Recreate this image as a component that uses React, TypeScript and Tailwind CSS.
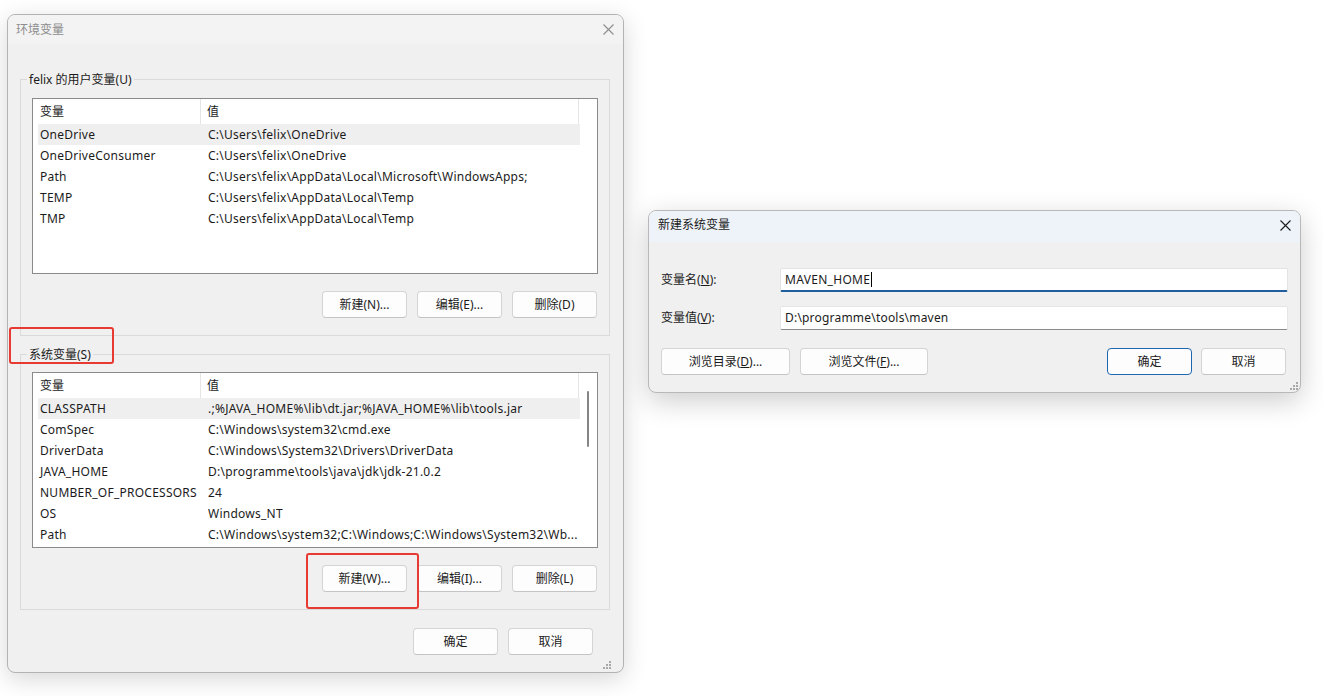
import React from "react";

const FONT = { fontFamily: '"Noto Sans", "Noto Sans CJK SC", sans-serif' };

type Row = [string, string];

const userRows: Row[] = [
  ["OneDrive", "C:\\Users\\felix\\OneDrive"],
  ["OneDriveConsumer", "C:\\Users\\felix\\OneDrive"],
  ["Path", "C:\\Users\\felix\\AppData\\Local\\Microsoft\\WindowsApps;"],
  ["TEMP", "C:\\Users\\felix\\AppData\\Local\\Temp"],
  ["TMP", "C:\\Users\\felix\\AppData\\Local\\Temp"],
];

const sysRows: Row[] = [
  ["CLASSPATH", ".;%JAVA_HOME%\\lib\\dt.jar;%JAVA_HOME%\\lib\\tools.jar"],
  ["ComSpec", "C:\\Windows\\system32\\cmd.exe"],
  ["DriverData", "C:\\Windows\\System32\\Drivers\\DriverData"],
  ["JAVA_HOME", "D:\\programme\\tools\\java\\jdk\\jdk-21.0.2"],
  ["NUMBER_OF_PROCESSORS", "24"],
  ["OS", "Windows_NT"],
  ["Path", "C:\\Windows\\system32;C:\\Windows;C:\\Windows\\System32\\Wb..."],
];

function CloseIcon({ color }: { color: string }) {
  return (
    <svg width="11" height="11" viewBox="0 0 11 11">
      <path d="M0.5 0.5 L10.5 10.5 M10.5 0.5 L0.5 10.5" stroke={color} strokeWidth="1.1" />
    </svg>
  );
}

function Grip() {
  return (
    <svg width="8" height="8" viewBox="0 0 8 8">
      {[
        [6, 0],
        [3, 3],
        [6, 3],
        [0, 6],
        [3, 6],
        [6, 6],
      ].map(([x, y], i) => (
        <rect key={i} x={x} y={y} width="2" height="2" fill="#a8a8a8" />
      ))}
    </svg>
  );
}

function Btn({
  children,
  w = "w-[85px]",
  primary = false,
}: {
  children: React.ReactNode;
  w?: string;
  primary?: boolean;
}) {
  return (
    <div
      className={`${w} h-[27px] shrink-0 flex items-center justify-center rounded-[4px] text-[12px] text-[#1b1b1b] bg-[#fdfdfd] border ${
        primary ? "border-[#1f66b0]" : "border-[#d4d4d4] border-b-[#c4c4c4]"
      }`}
    >
      {children}
    </div>
  );
}

function ListView({ rows, scroll }: { rows: Row[]; scroll?: boolean }) {
  return (
    <div className="h-[176px] border border-[#8a8a8a] bg-white flex overflow-hidden">
      <div className="flex-1 flex flex-col min-w-0">
        <div className="h-[25px] flex shrink-0 text-[12px] text-[#1b1b1b]">
          <div className="w-[168px] h-full pl-[7px] flex items-center border-r border-[#e5e5e5]">变量</div>
          <div className="w-[378px] h-full pl-[6px] flex items-center border-r border-[#e5e5e5]">值</div>
        </div>
        {rows.map(([k, v], i) => (
          <div
            key={k + i}
            className={`ml-[5px] w-[542px] h-[21px] shrink-0 flex items-center text-[12px] tracking-[0.25px] text-[#1b1b1b] whitespace-nowrap ${
              i === 0 ? "bg-[#efefef]" : ""
            }`}
          >
            <div className="w-[170px] pl-[2px] shrink-0">{k}</div>
            <div className="flex-1 overflow-hidden">{v}</div>
          </div>
        ))}
      </div>
      {scroll && (
        <div className="w-[18px] shrink-0 flex justify-center pt-[18px]">
          <div className="w-[2px] h-[56px] bg-[#858585] rounded-full" />
        </div>
      )}
    </div>
  );
}

function Group({
  label,
  rows,
  buttons,
  scroll,
  className,
}: {
  label: string;
  rows: Row[];
  buttons: string[];
  scroll?: boolean;
  className: string;
}) {
  return (
    <div className={`relative border border-[#dadada] ${className} pl-[11px] pr-[11px] flex flex-col`}>
      <div className="absolute left-[6px] -top-[8px] px-[2px] bg-[#f0f0f0] text-[12px] leading-[16px] text-[#1b1b1b]">
        {label}
      </div>
      <ListView rows={rows} scroll={scroll} />
      <div className="mt-[17px] flex justify-end gap-[10px] pr-[1px]">
        {buttons.map((b) => (
          <Btn key={b}>{b}</Btn>
        ))}
      </div>
    </div>
  );
}

export default function App() {
  return (
    <div className="relative w-[1323px] h-[696px] bg-white overflow-hidden" style={FONT}>
      {/* Main dialog: 环境变量 */}
      <div className="absolute left-[7px] top-[14px] w-[617px] h-[659px] rounded-[8px] border border-[#b3b3b3] bg-[#f0f0f0] shadow-[0_6px_24px_rgba(0,0,0,0.16)] flex flex-col overflow-hidden">
        <div className="h-[29px] shrink-0 bg-[#f3f3f3] flex items-center justify-between pl-[8px] pr-[9px]">
          <span className="text-[12px] text-[#8d8d8d]">环境变量</span>
          <CloseIcon color="#8d8d8d" />
        </div>
        <div className="flex-1 flex flex-col pl-[12px] pr-[13px] pt-[35px]">
          <Group
            label="felix 的用户变量(U)"
            rows={userRows}
            buttons={["新建(N)...", "编辑(E)...", "删除(D)"]}
            className="h-[257px] pt-[18px]"
          />
          <Group
            label="系统变量(S)"
            rows={sysRows}
            buttons={["新建(W)...", "编辑(I)...", "删除(L)"]}
            scroll
            className="h-[256px] mt-[18px] pt-[17px]"
          />
          <div className="mt-[18px] flex justify-end gap-[10px] pr-[17px]">
            <Btn w="w-[85px]">确定</Btn>
            <Btn w="w-[85px]">取消</Btn>
          </div>
          <div className="flex-1 flex items-end justify-end pb-[3px] -mr-[1px]">
            <Grip />
          </div>
        </div>
      </div>

      {/* Red highlight boxes */}
      <div className="absolute left-[9px] top-[327px] w-[105px] h-[37px] border-2 border-[#e63a33] rounded-[3px]" />
      <div className="absolute left-[306px] top-[553px] w-[113px] h-[56px] border-2 border-[#e63a33] rounded-[3px]" />

      {/* New system variable dialog */}
      <div className="absolute left-[648px] top-[210px] w-[653px] h-[183px] rounded-[8px] border border-[#b8b8b8] bg-[#f0f0f0] shadow-[0_8px_28px_rgba(0,0,0,0.2)] flex flex-col overflow-hidden">
        <div className="h-[31px] shrink-0 bg-[#eef3f9] flex items-center justify-between pl-[9px] pr-[9px] pb-[3px]">
          <span className="text-[12px] text-[#1b1b1b]">新建系统变量</span>
          <CloseIcon color="#1b1b1b" />
        </div>
        <div className="flex-1 flex flex-col pl-[12px] pr-[12px] pt-[26px] relative">
          <div className="flex items-center h-[24px]">
            <div className="w-[119px] shrink-0 text-[12px] text-[#1b1b1b]">
              变量名(<span className="underline">N</span>):
            </div>
            <div className="flex-1 h-[24px] bg-white border border-[#e3e3e3] border-b-2 border-b-[#1f5d9c] rounded-[2px] flex items-center pl-[4px] text-[12px] tracking-[0.3px] text-[#1b1b1b]">
              MAVEN_HOME
              <span className="w-[1px] h-[15px] bg-black ml-[1px]" />
            </div>
          </div>
          <div className="flex items-center h-[24px] mt-[14px]">
            <div className="w-[119px] shrink-0 text-[12px] text-[#1b1b1b]">
              变量值(<span className="underline">V</span>):
            </div>
            <div className="flex-1 h-[24px] bg-white border border-[#e6e6e6] border-b-[#8a8a8a] rounded-[2px] flex items-center pl-[4px] text-[12px] tracking-[0.2px] text-[#1b1b1b]">
              D:\programme\tools\maven
            </div>
          </div>
          <div className="mt-[18px] flex items-center pr-[2px]">
            <Btn w="w-[129px]">
              <span>
                浏览目录(<span className="underline">D</span>)...
              </span>
            </Btn>
            <div className="ml-[10px]">
              <Btn w="w-[128px]">
                <span>
                  浏览文件(<span className="underline">F</span>)...
                </span>
              </Btn>
            </div>
            <div className="flex-1" />
            <Btn w="w-[85px]" primary>
              确定
            </Btn>
            <div className="ml-[9px]">
              <Btn w="w-[85px]">取消</Btn>
            </div>
          </div>
          <div className="flex-1 flex items-end justify-end pb-[2px] -mr-[10px]">
            <Grip />
          </div>
        </div>
      </div>
    </div>
  );
}
